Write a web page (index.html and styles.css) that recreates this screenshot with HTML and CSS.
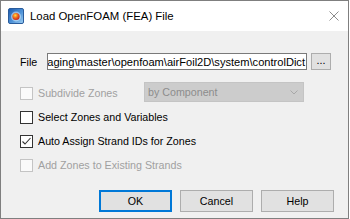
FILE: index.html
```html
<!DOCTYPE html>
<html>
<head>
<meta charset="utf-8">
<link rel="stylesheet" href="styles.css">
</head>
<body>
<div class="window">
  <div class="titlebar">
    <svg class="app-icon" viewBox="0 0 16 16">
      <defs>
        <linearGradient id="bg" x1="0" y1="0" x2="1" y2="1">
          <stop offset="0" stop-color="#1a58ad"/>
          <stop offset="0.55" stop-color="#4f93d8"/>
          <stop offset="1" stop-color="#9fd0f4"/>
        </linearGradient>
        <radialGradient id="ball" cx="0.4" cy="0.35" r="0.7">
          <stop offset="0" stop-color="#ffe040"/>
          <stop offset="0.45" stop-color="#f07020"/>
          <stop offset="1" stop-color="#c01818"/>
        </radialGradient>
      </defs>
      <rect x="0.5" y="0.5" width="15" height="15" rx="1.5" fill="url(#bg)" stroke="#2a5c9c"/>
      <circle cx="8" cy="8.5" r="5" fill="#d8ecfb" opacity="0.55"/>
      <circle cx="8" cy="8.5" r="3.6" fill="url(#ball)"/>
    </svg>
    <span class="title">Load OpenFOAM (FEA) File</span>
    <svg class="close" viewBox="0 0 10 10">
      <path d="M0.5 0.5 L9.5 9.5 M9.5 0.5 L0.5 9.5" stroke="#8c8c8c" stroke-width="1" fill="none"/>
    </svg>
  </div>
  <div class="content">
    <div class="file-row">
      <span class="file-label">File</span>
      <div class="path-box"><span class="path-text">aging\master\openfoam\airFoil2D\system\controlDict</span></div>
      <button class="browse">...</button>
    </div>
    <div class="subdivide-row">
      <div class="check check-sub disabled"><span class="box"></span><span>Subdivide Zones</span></div>
      <div class="combo">
        <span>by Component</span>
        <svg class="chevron" viewBox="0 0 8 5"><path d="M0.5 0.5 L4 4 L7.5 0.5" stroke="#a8a8a8" stroke-width="1" fill="none"/></svg>
      </div>
    </div>
    <div class="check first"><span class="box"></span><span>Select Zones and Variables</span></div>
    <div class="check"><span class="box"><svg class="tick" viewBox="0 0 11 11"><path d="M1.5 5.5 L4 8 L9.5 2" stroke="#333" stroke-width="1.1" fill="none"/></svg></span><span>Auto Assign Strand IDs for Zones</span></div>
    <div class="check disabled"><span class="box"></span><span>Add Zones to Existing Strands</span></div>
    <div class="buttons">
      <button class="btn default">OK</button>
      <button class="btn">Cancel</button>
      <button class="btn">Help</button>
    </div>
  </div>
</div>
</body>
</html>
```
FILE: styles.css
```css
body {
  margin: 0;
  background: #ffffff;
  font-family: "Liberation Sans", Arial, sans-serif;
  font-size: 10.7px;
  color: #000;
}

.window {
  width: 349px;
  height: 219px;
  box-sizing: border-box;
  border: 1px solid #7f7f7f;
  display: flex;
  flex-direction: column;
}

.titlebar {
  height: 30px;
  flex: none;
  background: #fff;
  display: flex;
  align-items: center;
  padding: 0 9px 0 7px;
}

.app-icon {
  width: 16px;
  height: 16px;
  margin-right: 6px;
  flex: none;
}

.title {
  font-size: 11.4px;
  color: #000;
}

.close {
  margin-left: auto;
  width: 10px;
  height: 10px;
}

.content {
  flex: 1;
  background: #f0f0f0;
  padding: 22px 14px 0 19px;
  display: flex;
  flex-direction: column;
}

.file-row {
  display: flex;
  align-items: center;
  height: 17px;
}

.file-label {
  width: 27px;
  flex: none;
}

.path-box {
  width: 260px;
  height: 17px;
  box-sizing: border-box;
  border: 1px solid #7a7a7a;
  background: #fff;
  display: flex;
  justify-content: flex-end;
  align-items: center;
  overflow: hidden;
  padding-right: 1px;
  flex: none;
}

.path-text {
  white-space: nowrap;
  flex: none;
  font-size: 11.1px;
}

.browse {
  margin-left: 4px;
  width: 20px;
  height: 17px;
  box-sizing: border-box;
  border: 1px solid #adadad;
  background: #e1e1e1;
  padding: 0 0 3px 0;
  font: inherit;
  color: #000;
  line-height: 1;
}

.subdivide-row {
  display: flex;
  align-items: center;
  height: 20px;
  margin-top: 12px;
}

.check {
  display: flex;
  align-items: center;
  height: 24px;
}

.check-sub {
  width: 124px;
  height: 20px;
  flex: none;
  position: relative;
  top: 1px;
}

.check.first {
  margin-top: 3px;
}

.box {
  width: 13px;
  height: 13px;
  box-sizing: border-box;
  border: 1px solid #333;
  background: #fff;
  margin-right: 5px;
  flex: none;
  display: flex;
}

.tick {
  width: 11px;
  height: 11px;
}

.disabled {
  color: #a0a0a0;
}

.disabled .box {
  border-color: #c4c4c4;
  background: #fafafa;
}

.combo {
  width: 160px;
  height: 20px;
  box-sizing: border-box;
  background: #cccccc;
  border: 1px solid #c4c4c4;
  color: #8c8c8c;
  display: flex;
  align-items: center;
  padding: 0 5px 0 3px;
}

.chevron {
  margin-left: auto;
  width: 8px;
  height: 5px;
}

.buttons {
  display: flex;
  justify-content: flex-end;
  gap: 8px;
  margin-top: 13px;
}

.btn {
  width: 73px;
  height: 22px;
  box-sizing: border-box;
  border: 1px solid #adadad;
  background: #e1e1e1;
  font: inherit;
  color: #000;
  padding: 0;
}

.btn.default {
  border: 2px solid #0078d7;
}
```
